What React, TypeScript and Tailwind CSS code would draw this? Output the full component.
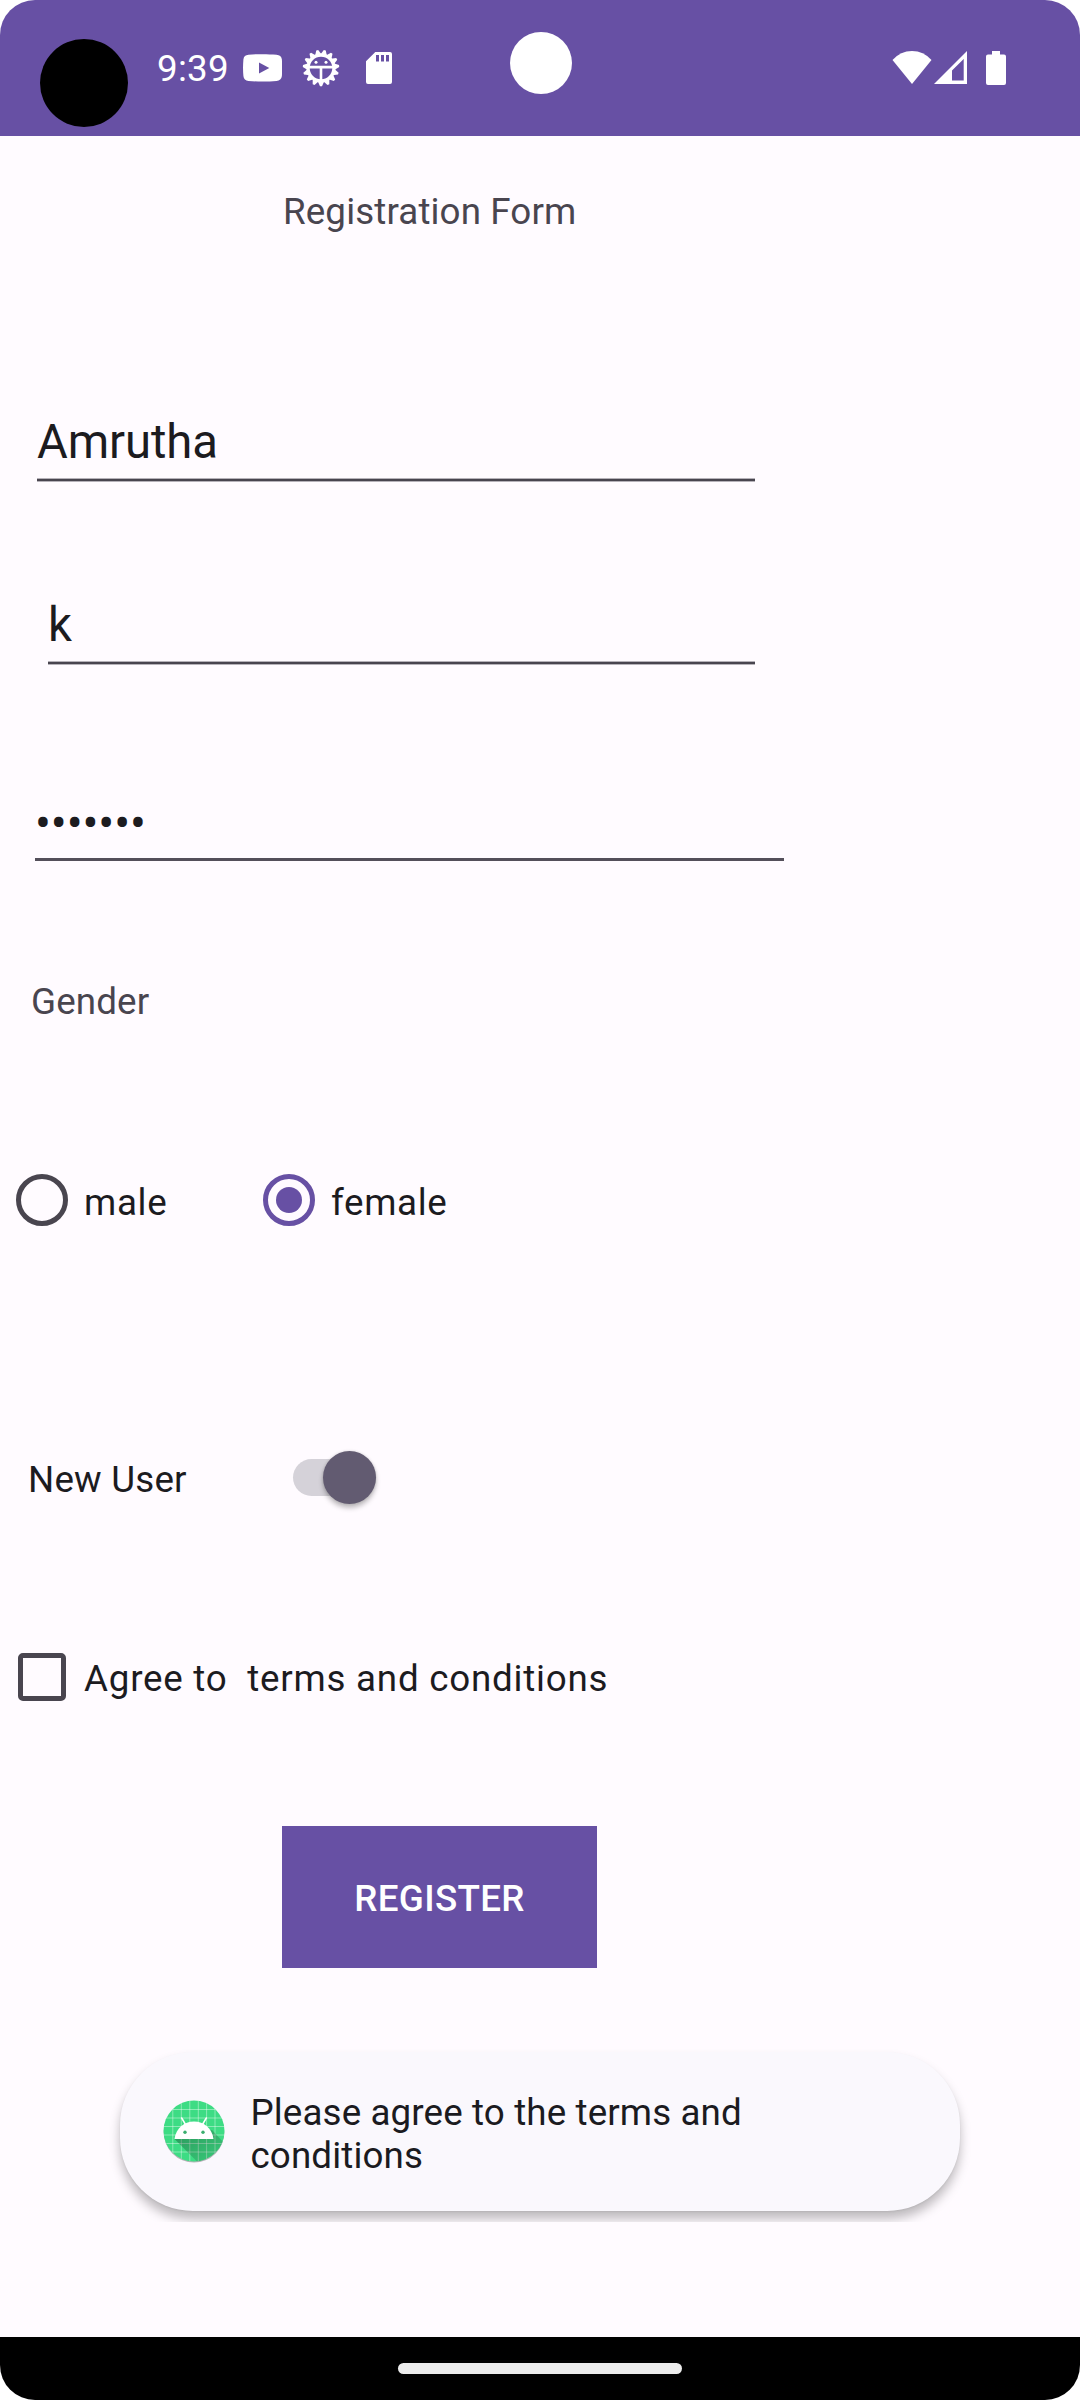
import React from "react";

function YoutubeIcon() {
  return (
    <svg className="block h-[28px] w-[39px]" viewBox="0 0 39 28">
      <path
        fill="#fff"
        fillRule="evenodd"
        d="M5.5.7C14 0 25 0 33.500.7 36.500.9 38.600 2.500 38.900 5.500 39.200 11 39.200 17 38.900 22 38.600 25 36.500 26.700 33.500 27 25 27.700 14 27.700 5.500 27 2.500 26.700.7 25 .4 22-.1 17-.1 11 .4 5.500.7 2.500 2.500.9 5.500.7ZM16 8.500V19.500L26.300 14Z"
      />
    </svg>
  );
}

function BugGearIcon() {
  const teeth = Array.from({ length: 15 }, (_, i) => i * 24 + 12);
  return (
    <svg className="block h-[38px] w-[38px]" viewBox="-19 -19 38 38">
      {teeth.map((a) => (
        <path key={a} d="M-3.300-13L-1-18.200H1L3.300-13Z" fill="#fff" transform={`rotate(${a})`} />
      ))}
      <circle r="12.900" fill="none" stroke="#fff" strokeWidth="3.200" />
      <path d="M-12.500-.9H12.500M0-.9V13" stroke="#fff" strokeWidth="2.600" />
      <circle cx="-5" cy="-5.800" r="1.500" fill="#fff" />
      <circle cx="5" cy="-5.800" r="1.500" fill="#fff" />
    </svg>
  );
}

function SdCardIcon() {
  return (
    <svg className="block h-[32px] w-[26px]" viewBox="0 0 26 32">
      <path
        fill="#fff"
        fillRule="evenodd"
        d="M9.300 0H24a2 2 0 0 1 2 2V30a2 2 0 0 1-2 2H2a2 2 0 0 1-2-2V9.300ZM10 3V9.500H13V3ZM15 3V9.500H18V3ZM20 3V9.500H23V3Z"
      />
    </svg>
  );
}

function StatusBar() {
  return (
    <header className="relative flex h-[136px] w-full items-start bg-[#6750a4] text-white">
      <div className="ml-[40px] mt-[39px] h-[88px] w-[88px] rounded-full bg-black" />
      <span className="ml-[29px] mt-[47px] w-[72px] whitespace-nowrap leading-[44px] tracking-[0.25px]">9:39</span>
      <div className="ml-[14px] mt-[54px]">
        <YoutubeIcon />
      </div>
      <div className="ml-[20px] mt-[49px]">
        <BugGearIcon />
      </div>
      <div className="ml-[26px] mt-[52px]">
        <SdCardIcon />
      </div>
      <div className="absolute left-[509.500px] top-[31.500px] h-[62px] w-[62px] rounded-full bg-white" />
      <div className="ml-auto mr-[74px] mt-[51px] flex items-start">
        <svg className="block h-[33px] w-[40px]" viewBox="0 0 40 33">
          <path d="M.5 9Q8.500 0 20 0T39.500 9L20 33Z" fill="#fff" />
        </svg>
        <svg className="ml-[2px] block h-[33px] w-[33px]" viewBox="0 0 33 33">
          <path fillRule="evenodd" d="M0 33L33 0V33ZM18 19.500V29.500H29.700V8Z" fill="#fff" />
        </svg>
        <svg className="ml-[19px] block h-[34px] w-[20px]" viewBox="0 0 20 34">
          <path
            d="M6 0H14V3.500H18a2 2 0 0 1 2 2V32a2 2 0 0 1-2 2H2a2 2 0 0 1-2-2V5.500a2 2 0 0 1 2-2H6Z"
            fill="#fff"
          />
        </svg>
      </div>
    </header>
  );
}

function SoftLine() {
  return <div className="mt-[8px] h-[4px] border-y border-[#49454f]/40 bg-[#49454f] bg-clip-padding" />;
}

function LauncherIcon() {
  return (
    <svg className="block h-[64px] w-[62px]" viewBox="0 0 62 64">
      <defs>
        <clipPath id="disc">
          <circle cx="31" cy="31" r="30.500" />
        </clipPath>
        <linearGradient id="fall" x1="0" y1="0" x2="1" y2="1">
          <stop offset="0" stopColor="#000" stopOpacity=".32" />
          <stop offset="1" stopColor="#000" stopOpacity=".06" />
        </linearGradient>
      </defs>
      <circle cx="31" cy="32.300" r="30.300" fill="#000" opacity=".28" />
      <circle cx="31" cy="31" r="30.500" fill="#3ddc84" />
      <g clipPath="url(#disc)">
        <path
          d="M9.800 0V62M18.300 0V62M26.800 0V62M35.300 0V62M43.600 0V62M52 0V62M0 9.500H62M0 18H62M0 26.500H62M0 35H62M0 43.500H62M0 52H62"
          stroke="#fff"
          strokeOpacity=".45"
          strokeWidth=".9"
        />
        <path d="M11.500 39L35 62.500H62V44L49 30Z" fill="url(#fall)" />
      </g>
      <path d="M11.500 39C13 28 21 21.500 31 21.500S49 28 50.500 39Z" fill="#fff" />
      <path d="M18.700 18L22.800 25M43.300 18L39.200 25" stroke="#fff" strokeWidth="1.500" strokeLinecap="round" />
      <circle cx="22" cy="32.300" r="1.700" fill="#3aae6e" />
      <circle cx="40" cy="32.300" r="1.700" fill="#3aae6e" />
    </svg>
  );
}

function Toast() {
  return (
    <div className="absolute left-[100px] top-[2032px] h-[190px] w-[880px] overflow-hidden px-[20px] pt-[20px]">
      <div className="flex h-[159px] w-[840px] items-start rounded-[73px] bg-[#faf8fd] shadow-[0_8px_11px_rgba(0,0,0,0.26),0_1px_2px_rgba(0,0,0,0.06)]">
        <div className="ml-[42.500px] mt-[47.500px]">
          <LauncherIcon />
        </div>
        <p className="ml-[26px] mt-[39px] whitespace-nowrap text-[36.75px] leading-[43px] tracking-[0.12px] text-[#1b1b1f]">
          Please agree to the terms and
          <br />
          conditions
        </p>
      </div>
    </div>
  );
}

export default function App() {
  return (
    <div className="h-[2400px] w-[1080px] bg-white">
      <div className="relative flex h-full w-full flex-col overflow-hidden rounded-[35px] bg-[#fffbff] font-['Roboto',sans-serif] text-[36.75px] leading-[44px] text-[#1c1b1f]">
        <StatusBar />
        <main className="flex flex-1 flex-col items-start">
          <h1 className="ml-[283px] mt-[54px] whitespace-nowrap tracking-[0.12px] text-[#49454f]">Registration Form</h1>

          <div className="ml-[37px] mt-[180px] w-[718px]">
            <div className="text-[47.25px] leading-[56px] tracking-[-0.1px]">Amrutha</div>
            <SoftLine />
          </div>
          <div className="ml-[48px] mt-[115px] w-[707px]">
            <div className="text-[47.25px] leading-[56px]">k</div>
            <SoftLine />
          </div>
          <div className="ml-[35px] mt-[129px] w-[749px]">
            <div className="h-[56px] pt-[2px] text-[47.25px] leading-[56px] tracking-[-0.1px]">•••••••</div>
            <div className="mt-[8px] h-[3px] bg-[#544f5a]" />
          </div>

          <div className="ml-[31px] mt-[119px] tracking-[0.12px] text-[#49454f]">Gender</div>

          <div className="ml-[16px] mt-[146px] flex h-[60px] items-center tracking-[0.66px]">
            <div className="h-[52px] w-[52px] shrink-0 rounded-full border-[5px] border-[#49454f]" />
            <span className="w-[195px] pl-[16px] pt-[5px]">male</span>
            <div className="flex h-[52px] w-[52px] shrink-0 items-center justify-center rounded-full border-[5px] border-[#6750a4]">
              <div className="h-[26px] w-[26px] rounded-full bg-[#6750a4]" />
            </div>
            <span className="pl-[16px] pt-[5px]">female</span>
          </div>

          <div className="ml-[28px] mt-[217px] flex h-[60px] items-center">
            <span className="w-[265px] pt-[5px] tracking-[0.2px]">New User</span>
            <div className="flex h-[37px] w-[83px] items-center justify-end rounded-full bg-[#d5d2d9]">
              <div className="h-[53px] w-[53px] shrink-0 rounded-full bg-[#625b71] shadow-[0_4px_5px_rgba(0,0,0,0.25),0_0_3px_rgba(0,0,0,0.15)]" />
            </div>
          </div>

          <div className="ml-[18px] mt-[140px] flex h-[60px] items-center tracking-[0.76px]">
            <div className="h-[48px] w-[48px] shrink-0 rounded-[5px] border-[5px] border-[#49454f]" />
            <span className="whitespace-pre pl-[18px] pt-[4px]">{"Agree to  terms and conditions"}</span>
          </div>

          <button className="ml-[282px] mt-[119px] flex h-[142px] w-[315px] items-center justify-center bg-[#6750a4] pt-[4px] font-medium tracking-[0.32px] text-white">
            REGISTER
          </button>
        </main>
        <Toast />
        <footer className="flex h-[63px] w-full items-start justify-center bg-black pt-[26px]">
          <div className="h-[11px] w-[284px] rounded-full bg-[#ececec]" />
        </footer>
      </div>
    </div>
  );
}
